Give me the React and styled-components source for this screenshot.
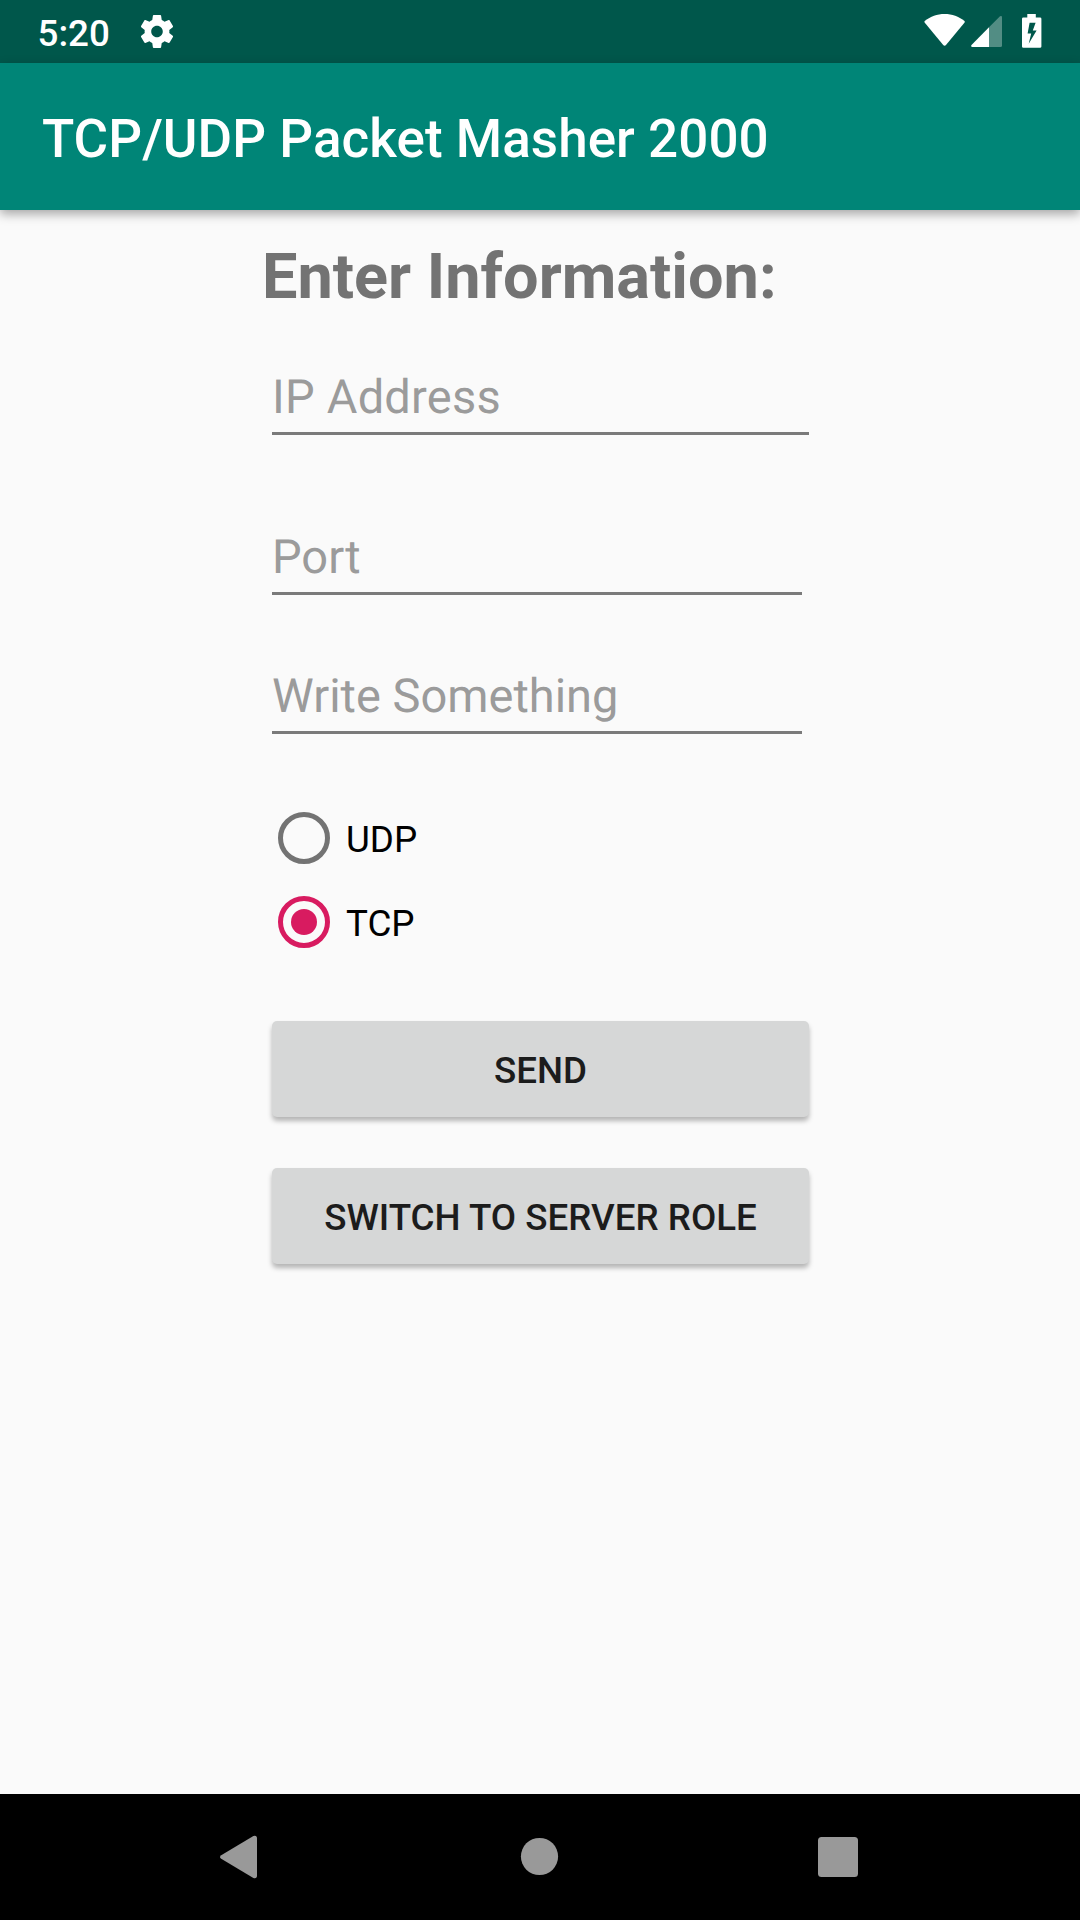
import React, { useState } from "react";
import styled, { createGlobalStyle } from "styled-components";

const GlobalStyle = createGlobalStyle`
  * { box-sizing: border-box; }
  body { margin: 0; background: #fafafa; font-family: Roboto, sans-serif; }
`;

const Screen = styled.div`
  display: flex;
  flex-direction: column;
  width: 1080px;
  height: 1920px;
  overflow: hidden;
  background: #fafafa;
`;

const StatusBar = styled.header`
  display: flex;
  align-items: flex-start;
  height: 63px;
  padding: 0 38px 0 37.5px;
  background: #00574b;
  color: #fff;
`;

const Clock = styled.time`
  width: 99.5px;
  padding-top: 12px;
  font-size: 36.75px;
  font-weight: 500;
  line-height: 43px;
`;

const StatusIcon = styled.svg`
  display: block;
  flex: none;
  width: ${(p) => p.$width}px;
  height: 63px;
  margin-left: ${(p) => p.$gap || 0}px;
`;

const Spacer = styled.div`
  flex: 1;
`;

const AppBar = styled.div`
  display: flex;
  flex: none;
  align-items: center;
  height: 147px;
  padding: 5px 42px 0;
  background: #008577;
  box-shadow: 0 4px 10px rgba(0, 0, 0, 0.34);
`;

const Title = styled.h1`
  margin: 0;
  color: #fff;
  font-size: 53px;
  font-weight: 500;
  letter-spacing: 0.05px;
  line-height: 62px;
  white-space: nowrap;
`;

const Form = styled.main`
  display: flex;
  flex: 1;
  flex-direction: column;
  align-items: flex-start;
  padding: 29px 0 0 272px;
`;

const Heading = styled.h2`
  margin: 0 0 0 -10px;
  color: #737373;
  font-size: 63px;
  font-weight: 700;
  line-height: 75px;
  white-space: nowrap;
`;

const Field = styled.input`
  display: block;
  width: ${(p) => p.$width}px;
  height: 76px;
  margin-top: ${(p) => p.$gap}px;
  padding: 4px 0 0;
  border: 0;
  border-bottom: 3px solid #7a7a7a;
  border-radius: 0;
  outline: none;
  background: transparent;
  color: #212121;
  font: 400 47px Roboto, sans-serif;
  letter-spacing: ${(p) => p.$tracking || 0}px;
  text-rendering: geometricPrecision;

  &::placeholder {
    color: #9b9b9b;
    opacity: 1;
  }
`;

const RadioGroup = styled.div`
  display: flex;
  flex-direction: column;
  margin: 62px 0 0 6px;
`;

const RadioLabel = styled.label`
  display: flex;
  align-items: center;
  height: 84px;
  color: #000;
  font-size: 36.75px;
  line-height: 43px;
`;

const RadioInput = styled.input`
  appearance: none;
  display: grid;
  place-content: center;
  width: 52px;
  height: 52px;
  margin: 0;
  border: 5px solid #737373;
  border-radius: 50%;

  &:checked {
    border-color: #d81b60;
  }

  &:checked::before {
    content: "";
    width: 26px;
    height: 26px;
    border-radius: 50%;
    background: #d81b60;
  }
`;

const RadioText = styled.span`
  padding: 2px 0 0 16px;
`;

const Button = styled.button`
  width: 537px;
  height: 96px;
  margin-top: ${(p) => p.$gap}px;
  padding: 3px 0 0;
  border: 0;
  border-radius: 5px;
  background: #d6d7d7;
  box-shadow: 0 4px 5px rgba(0, 0, 0, 0.28);
  color: #1c1c1c;
  font: 500 36.75px/43px Roboto, sans-serif;
  text-transform: uppercase;
  white-space: nowrap;
`;

const NavBar = styled.nav`
  display: flex;
  flex: none;
  justify-content: center;
  align-items: center;
  gap: 173px;
  height: 126px;
  background: #000;
`;

const NavIcon = styled.svg`
  display: block;
  width: 126px;
  height: 126px;
  fill: #999;
`;

export default function App() {
  const [protocol, setProtocol] = useState("TCP");
  return (
    <>
      <GlobalStyle />
      <Screen>
        <StatusBar>
          <Clock>5:20</Clock>
          <StatusIcon $width={40} viewBox="0 0 40 63">
            <path
              transform="translate(0.2 11.7) scale(1.65)"
              fill="#fff"
              d="M19.43 12.98c.04-.32.07-.64.07-.98s-.03-.66-.07-.98l2.11-1.65c.19-.15.24-.42.12-.64l-2-3.46c-.12-.22-.39-.3-.61-.22l-2.490 1c-.52-.4-1.080-.73-1.690-.98l-.38-2.650C14.460 2.180 14.250 2 14 2h-4c-.25 0-.46.18-.49.42l-.38 2.650c-.61.25-1.170.59-1.690.98l-2.490-1c-.23-.09-.49 0-.61.22l-2 3.460c-.13.22-.07.49.12.64l2.110 1.650c-.04.32-.07.65-.07.98s.03.66.07.98l-2.110 1.650c-.19.15-.24.42-.12.64l2 3.460c.12.22.39.3.61.22l2.490-1c.52.4 1.080.73 1.690.98l.38 2.650c.03.24.24.42.49.42h4c.25 0 .46-.18.49-.42l.38-2.650c.61-.25 1.170-.59 1.690-.98l2.490 1c.23.09.49 0 .61-.22l2-3.460c.12-.22.07-.49-.12-.64l-2.110-1.650zM12 15.500c-1.930 0-3.500-1.570-3.500-3.500s1.570-3.500 3.500-3.500 3.500 1.570 3.500 3.500-1.570 3.500-3.500 3.500z"
            />
          </StatusIcon>
          <Spacer />
          <StatusIcon $width={41} viewBox="0 0 41 63">
            <path
              fill="#fff"
              d="M.8 22.8Q-.1 21.6 1 20.7C6.500 16.500 13 14 20.600 14S34.700 16.500 40.200 20.700Q41.300 21.600 40.400 22.800L22.200 44.800Q20.600 46.700 19 44.800Z"
            />
          </StatusIcon>
          <StatusIcon $width={31} $gap={6} viewBox="0 0 31 63">
            <path fill="#fff" fillOpacity="0.32" d="M29 16.300Q31 15.300 31 17.300V45.500Q31 47 29.500 47H18V27.200Z" />
            <path fill="#fff" d="M18 27.200V47H1.300Q-.5 46.500.5 44.900Z" />
          </StatusIcon>
          <StatusIcon $width={20} $gap={20} viewBox="0 0 20 63">
            <path
              fill="#fff"
              fillRule="evenodd"
              d="M5.300 14H13.800V17.400H18Q19.400 17.400 19.400 18.800V46.400Q19.400 47.800 18 47.800H1.400Q0 47.800 0 46.400V18.800Q0 17.400 1.400 17.400H5.300ZM7.600 22.700L5.600 33.500H9.200L6.700 43.800L14.600 30.600H10.800L13.600 22.700Z"
            />
          </StatusIcon>
        </StatusBar>
        <AppBar>
          <Title>TCP/UDP Packet Masher 2000</Title>
        </AppBar>
        <Form>
          <Heading>Enter Information:</Heading>
          <Field $width={537} $gap={45} $tracking={0.22} placeholder="IP Address" />
          <Field $width={530} $gap={84} placeholder="Port" />
          <Field $width={530} $gap={63} placeholder="Write Something" />
          <RadioGroup>
            {["UDP", "TCP"].map((name) => (
              <RadioLabel key={name}>
                <RadioInput
                  type="radio"
                  name="protocol"
                  checked={protocol === name}
                  onChange={() => setProtocol(name)}
                />
                <RadioText>{name}</RadioText>
              </RadioLabel>
            ))}
          </RadioGroup>
          <Button $gap={57}>Send</Button>
          <Button $gap={51}>Switch to server role</Button>
        </Form>
        <NavBar>
          <NavIcon viewBox="0 0 126 126">
            <path d="M43.200 64.800L75.400 84Q79 85 79 81.500V44.500Q79 41 75.400 42L43.200 61.200Q40.800 63 43.200 64.800Z" />
          </NavIcon>
          <NavIcon viewBox="0 0 126 126">
            <circle cx="62.500" cy="62.500" r="18.600" />
          </NavIcon>
          <NavIcon viewBox="0 0 126 126">
            <rect x="42" y="43" width="40" height="40" rx="3.500" />
          </NavIcon>
        </NavBar>
      </Screen>
    </>
  );
}
